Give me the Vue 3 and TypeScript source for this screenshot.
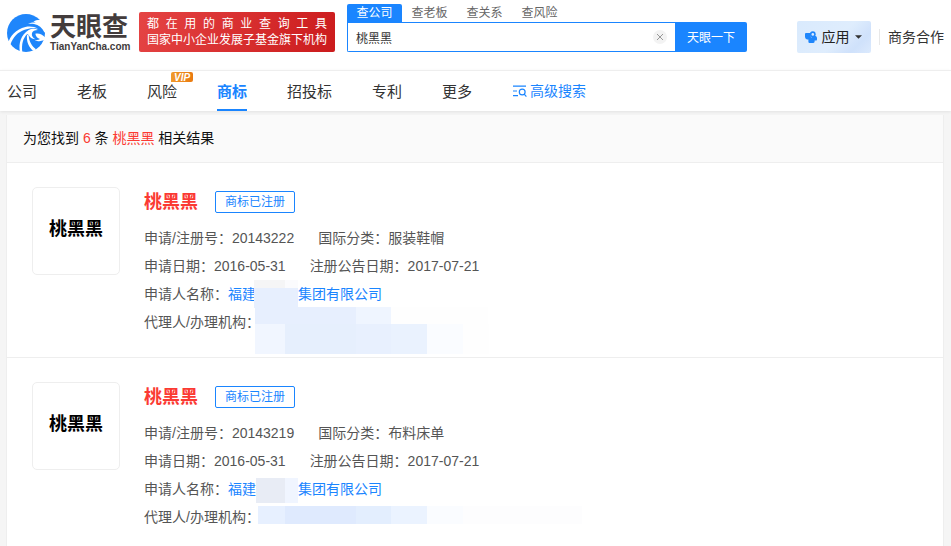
<script setup lang="ts">
import { ref } from 'vue'

interface NavItem {
  label: string
  vip?: boolean
}

interface Trademark {
  name: string
  status: string
  regNo: string
  category: string
  applied: string
  published: string
  mask: string
}

const searchTabs: string[] = ['查公司', '查老板', '查关系', '查风险']
const activeTab = ref('查公司')
const keyword = ref('桃黑黑')

const navItems: NavItem[] = [
  { label: '公司' },
  { label: '老板' },
  { label: '风险', vip: true },
  { label: '商标' },
  { label: '招投标' },
  { label: '专利' },
  { label: '更多' },
]
const activeNav = '商标'

const results: Trademark[] = [
  {
    name: '桃黑黑',
    status: '商标已注册',
    regNo: '20143222',
    category: '服装鞋帽',
    applied: '2016-05-31',
    published: '2017-07-21',
    mask: 'tall',
  },
  {
    name: '桃黑黑',
    status: '商标已注册',
    regNo: '20143219',
    category: '布料床单',
    applied: '2016-05-31',
    published: '2017-07-21',
    mask: 'short',
  },
]
</script>

<template>
  <div class="page">
    <header class="top">
      <a class="logo" href="#" aria-label="天眼查">
        <svg class="logo-mark" viewBox="9 7 114 114" aria-hidden="true">
          <circle cx="66" cy="64" r="57" fill="#1f86fb" />
          <g fill="#fff">
            <path d="M104 10 L128 10 L128 64 L121 62 C115 48 104 40 90 37 C84 36 78 36 72 37 C80 33 88 32 96 33 C93 31 90 30 88 30 C93 26 99 24 108 24 Z" />
            <path d="M12 96 C18 72 36 53 64 46 C78 43 92 45 102 51 C86 48 73 50 62 54 C42 61 28 74 19 99 Z" />
            <path d="M48 122 C43 94 51 69 74 55 C84 50 94 51 102 55 C92 55 86 59 84 64 C82 72 86 78 94 83 C84 82 77 77 74 70 C72 68 70 67 69 68 C57 80 52 98 55 122 Z" />
            <path d="M88 118 C74 106 67 90 69 70 L74 71 C75 90 84 104 96 113 Z" />
            <path d="M94 66 C104 63 116 68 124 78 L120 86 C108 90 98 89 92 84 C98 86 104 85 108 82 C101 80 95 74 94 66 Z" />
          </g>
        </svg>
        <span class="logo-text">
          <span class="logo-cn">天眼查</span>
          <span class="logo-en">TianYanCha.com</span>
        </span>
      </a>

      <div class="slogan">
        <span class="slogan-line spread">都在用的商业查询工具</span>
        <span class="slogan-line">国家中小企业发展子基金旗下机构</span>
      </div>

      <form class="search" @submit.prevent>
        <div class="search-tabs">
          <button
            v-for="tab in searchTabs"
            :key="tab"
            type="button"
            class="search-tab"
            :class="{ active: tab === activeTab }"
            @click="activeTab = tab"
          >
            {{ tab }}
          </button>
        </div>
        <div class="search-row">
          <div class="search-field">
            <input v-model="keyword" class="search-input" type="text" aria-label="搜索关键词" />
            <button type="button" class="clear" aria-label="清除" @click="keyword = ''">
              <svg viewBox="0 0 14 14" aria-hidden="true">
                <path d="M4 4 L10 10 M10 4 L4 10" stroke="#999" stroke-width="1" fill="none" />
              </svg>
            </button>
          </div>
          <button type="submit" class="search-btn">天眼一下</button>
        </div>
      </form>

      <div class="tools">
        <button type="button" class="app-btn">
          <svg class="app-icon" viewBox="0 0 12 12" aria-hidden="true">
            <path
              fill="#1f86fb"
              d="M1 2 H5.6 V5 H10.6 Q12 5.4 12 7 V8.4 Q12 9.6 10.6 9.6 H9.6 V10.8 Q9.4 12 8 12 H4.6 Q3.4 12 3.4 10.8 V8.4 H2 Q0 8 0 6 V3 Q0 2 1 2 Z"
            />
            <circle cx="7.8" cy="3.2" r="2.9" fill="#1f86fb" />
            <circle cx="7.8" cy="3.4" r="1.3" fill="#dcebff" />
            <path d="M5.6 5.8 L6.8 6.6" stroke="#8fc1fd" stroke-width="0.7" />
          </svg>
          <span class="app-label">应用</span>
          <svg class="caret" viewBox="0 0 8 4" aria-hidden="true">
            <path d="M0 0 H8 L4 4 Z" fill="#333" />
          </svg>
        </button>
        <span class="divider"></span>
        <a class="biz" href="#">商务合作</a>
      </div>
    </header>

    <nav class="nav">
      <a
        v-for="item in navItems"
        :key="item.label"
        href="#"
        class="nav-item"
        :class="{ active: item.label === activeNav }"
      >
        {{ item.label }}
        <span v-if="item.vip" class="vip">VIP</span>
      </a>
      <a class="advanced" href="#">
        <svg viewBox="0 0 14 12" aria-hidden="true">
          <g fill="none" stroke="#1a85ff" stroke-width="1.2">
            <path d="M0 1.2 H13 M0 6 H4 M0 10.6 H5" />
            <circle cx="9.2" cy="7" r="2.9" />
            <path d="M11.2 9.2 L13.4 11.6" />
          </g>
        </svg>
        <span>高级搜索</span>
      </a>
    </nav>

    <main class="content">
      <section class="card">
        <p class="summary">为您找到 <em>6</em> 条 <em>桃黑黑</em> 相关结果</p>

        <article v-for="item in results" :key="item.regNo" class="result">
          <div class="thumb"><span>{{ item.name }}</span></div>
          <div class="info">
            <div class="title-row">
              <a class="title" href="#">{{ item.name }}</a>
              <span class="status">{{ item.status }}</span>
            </div>
            <div class="row">
              <span>申请/注册号：{{ item.regNo }}</span>
              <span>国际分类：{{ item.category }}</span>
            </div>
            <div class="row">
              <span>申请日期：{{ item.applied }}</span>
              <span>注册公告日期：{{ item.published }}</span>
            </div>
            <div class="row">
              <span>申请人名称：<a class="company" href="#">福建<span class="gap"></span>集团有限公司</a></span>
            </div>
            <div class="row">
              <span>代理人/办理机构：</span>
            </div>
            <svg
              v-if="item.mask === 'tall'"
              class="mosaic"
              viewBox="0 0 330 76"
              shape-rendering="crispEdges"
              aria-hidden="true"
            >
              <rect x="0" y="2" width="31" height="8" fill="#f5f5f6" />
              <rect x="31" y="2" width="13" height="8" fill="#fbfbfd" />
              <rect x="0" y="10" width="44" height="20" fill="#e7effe" />
              <rect x="1" y="29" width="101" height="17" fill="#e7effe" />
              <rect x="102" y="29" width="35" height="17" fill="#eff5ff" />
              <rect x="137" y="29" width="97" height="17" fill="#fefefe" />
              <rect x="1" y="46" width="30" height="30" fill="#f1f6ff" />
              <rect x="31" y="46" width="71" height="30" fill="#e6effd" />
              <rect x="102" y="46" width="35" height="30" fill="#e8f0fe" />
              <rect x="137" y="46" width="36" height="30" fill="#eaf2fe" />
              <rect x="173" y="46" width="36" height="30" fill="#fafcff" />
              <rect x="209" y="46" width="26" height="30" fill="#fefefe" />
            </svg>
            <svg
              v-else
              class="mosaic"
              viewBox="0 0 330 76"
              shape-rendering="crispEdges"
              aria-hidden="true"
            >
              <rect x="2" y="5" width="29" height="25" fill="#e8ecf5" />
              <rect x="31" y="5" width="13" height="25" fill="#f0f5ff" />
              <rect x="4" y="33" width="27" height="18" fill="#e7f0ff" />
              <rect x="31" y="33" width="71" height="18" fill="#dfeafe" />
              <rect x="102" y="33" width="35" height="18" fill="#e3eefe" />
              <rect x="137" y="33" width="36" height="18" fill="#ebf3ff" />
              <rect x="173" y="33" width="36" height="18" fill="#fafcff" />
              <rect x="209" y="33" width="119" height="18" fill="#fdfdfe" />
            </svg>
          </div>
        </article>
      </section>
    </main>
  </div>
</template>

<style>
body {
  background: #f5f5f5;
  overflow: hidden;
}
</style>

<style scoped>
.page {
  font-family: "Liberation Sans", "Noto Sans CJK SC", sans-serif;
  font-size: 14px;
  color: #333;
  background: #f5f5f5;
}

a {
  color: inherit;
  text-decoration: none;
}

button {
  font: inherit;
  border: 0;
  padding: 0;
  cursor: pointer;
}

.top {
  display: flex;
  align-items: flex-start;
  height: 70px;
  padding: 0 7px;
  background: #fff;
  box-sizing: border-box;
}

.logo {
  display: flex;
  align-items: center;
  gap: 5px;
  width: 124px;
  margin: 12px 8px 0 0;
}

.logo-mark {
  width: 38px;
  height: 42px;
  flex: none;
}

.logo-text {
  display: flex;
  flex-direction: column;
  color: #433c3c;
  font-weight: 700;
  white-space: nowrap;
}

.logo-cn {
  font-size: 26px;
  line-height: 28px;
}

.logo-en {
  font-size: 10px;
  line-height: 12px;
}

.slogan {
  display: flex;
  flex-direction: column;
  justify-content: center;
  width: 180px;
  height: 40px;
  margin: 12px 12px 0 0;
  padding: 0 8px;
  border-radius: 2px;
  background: linear-gradient(110deg, #e54444, #cb1b1c);
  color: #fff;
  font-size: 12px;
  line-height: 16px;
  white-space: nowrap;
}

.spread {
  text-align: justify;
  text-align-last: justify;
}

.search {
  flex: 0 1 400px;
  margin-top: 4px;
  font-size: 12px;
}

.search-tabs {
  display: flex;
}

.search-tab {
  width: 55px;
  height: 18px;
  line-height: 18px;
  background: none;
  color: #666;
}

.search-tab.active {
  background: #1a85ff;
  color: #fff;
  border-radius: 2px 2px 0 0;
}

.search-row {
  display: flex;
  height: 30px;
}

.search-field {
  display: flex;
  flex: 1;
  align-items: center;
  padding: 0 8px;
  border: 1px solid #1a85ff;
  border-right: 0;
  border-radius: 0 0 0 2px;
  background: #fff;
}

.search-input {
  flex: 1;
  min-width: 0;
  padding: 0;
  border: 0;
  outline: 0;
  font: inherit;
  color: #333;
  background: none;
}

.clear {
  display: flex;
  width: 14px;
  height: 14px;
  border-radius: 50%;
  background: #f3f3f3;
}

.search-btn {
  width: 72px;
  padding-bottom: 2px;
  background: #1a85ff;
  color: #fff;
  border-radius: 0 2px 2px 0;
}

.tools {
  display: flex;
  align-items: center;
  height: 32px;
  margin: 21px 0 0 auto;
}

.app-btn {
  display: flex;
  align-items: center;
  justify-content: center;
  gap: 5px;
  width: 74px;
  height: 32px;
  padding-right: 2px;
  border-radius: 2px;
  background: linear-gradient(135deg, #d9eafd 0%, #dfedfd 55%, #cfe1fb 80%, #dceafd 100%);
  color: #222;
}

.app-icon {
  width: 12px;
  height: 12px;
}

.app-label,
.biz {
  padding-bottom: 2px;
}

.caret {
  width: 7px;
  height: 4px;
}

.divider {
  width: 1px;
  height: 16px;
  margin: 0 8px;
  background: #e8e8e8;
}

.nav {
  position: relative;
  display: flex;
  gap: 40px;
  height: 40px;
  padding: 0 7px;
  border-top: 1px solid #eee;
  background: #fff;
  box-shadow: 0 1px 3px rgba(0, 0, 0, 0.08);
  font-size: 15px;
  line-height: 42px;
}

.nav-item {
  position: relative;
}

.nav-item.active {
  color: #1a85ff;
  font-weight: 700;
  box-shadow: inset 0 -2px #1a85ff;
}

.vip {
  position: absolute;
  left: 24px;
  top: 1px;
  width: 22px;
  height: 10px;
  border-radius: 2px 2px 2px 0;
  background: linear-gradient(90deg, #f09a2c, #ea7a10);
  color: #fff;
  font-size: 10px;
  font-style: italic;
  font-weight: 700;
  line-height: 11px;
  text-align: center;
}

.advanced {
  display: flex;
  align-items: center;
  gap: 3px;
  padding-left: 1px;
  color: #1a85ff;
  font-size: 14px;
}

.advanced svg {
  width: 14px;
  height: 12px;
}

.content {
  padding: 4px 7px 0;
}

.card {
  background: #fff;
  border: 1px solid #eee;
  border-width: 0 1px;
  margin: 0 0 0 -1px;
}

.summary {
  margin: 0;
  padding: 0 16px;
  line-height: 47px;
  border-bottom: 1px solid #eee;
  background: #fafafa;
  color: #111;
}

.summary em {
  color: #fb3a33;
  font-style: normal;
}

.result {
  display: flex;
  gap: 24px;
  padding: 24px 25px 21px;
  border-bottom: 1px solid #eee;
}

.thumb {
  display: flex;
  align-items: center;
  justify-content: center;
  flex: none;
  box-sizing: border-box;
  width: 88px;
  height: 88px;
  padding-bottom: 4px;
  border: 1px solid #eee;
  border-radius: 5px;
  color: #000;
  font-size: 18px;
  font-weight: 700;
  line-height: 24px;
}

.info {
  position: relative;
  flex: 1;
  color: #555;
}

.title-row {
  display: flex;
  align-items: center;
  gap: 17px;
  height: 30px;
  margin-bottom: 7px;
}

.title {
  padding-bottom: 4px;
  color: #fb3a33;
  font-size: 18px;
  font-weight: 700;
}

.status {
  padding: 0 9px;
  border: 1px solid #1a85ff;
  border-radius: 2px;
  color: #1a85ff;
  font-size: 12px;
  line-height: 20px;
}

.row {
  display: flex;
  gap: 24px;
  line-height: 28px;
}

.company {
  color: #1a85ff;
}

.gap {
  display: inline-block;
  width: 42px;
}

.mosaic {
  position: absolute;
  left: 110px;
  top: 91px;
  width: 330px;
  height: 76px;
}
</style>
